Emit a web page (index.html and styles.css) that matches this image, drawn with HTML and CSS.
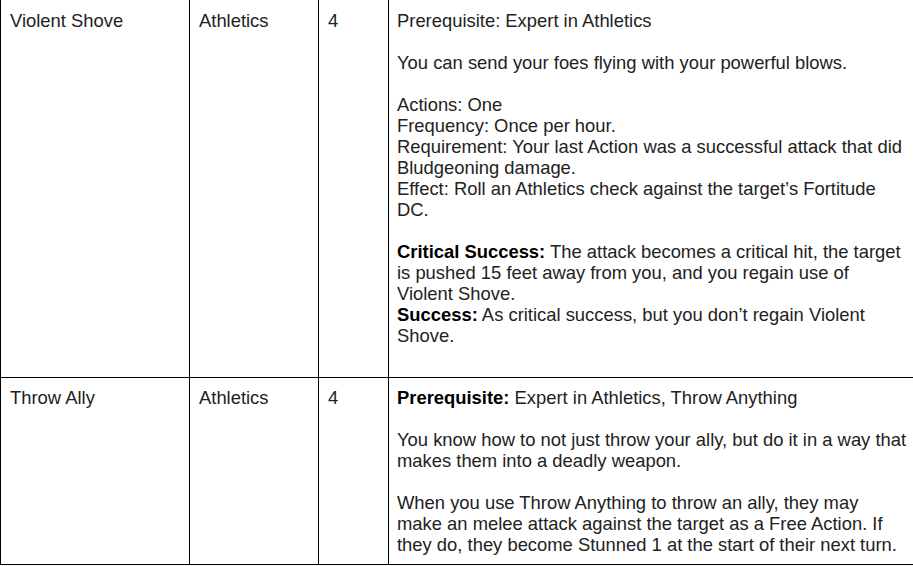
FILE: index.html
```html
<!DOCTYPE html>
<html>
<head>
<meta charset="utf-8">
<link rel="stylesheet" href="styles.css">
</head>
<body>
<div class="sheet">
  <div class="row first">
    <div class="cell c1">Violent Shove</div>
    <div class="cell c2">Athletics</div>
    <div class="cell c3">4</div>
    <div class="cell c4">
      <p class="sp">Prerequisite: Expert in Athletics</p>
      <p class="sp">You can send your foes flying with your powerful blows.</p>
      <p>Actions: One</p>
      <p>Frequency: Once per hour.</p>
      <p>Requirement: Your last Action was a successful attack that did Bludgeoning damage.</p>
      <p class="sp">Effect: Roll an Athletics check against the target’s Fortitude DC.</p>
      <p><b>Critical Success:</b> The attack becomes a critical hit, the target is pushed 15 feet away from you, and you regain use of Violent Shove.</p>
      <p class="sp"><b>Success:</b> As critical success, but you don’t regain Violent Shove.</p>
    </div>
  </div>
  <div class="row second">
    <div class="cell c1">Throw Ally</div>
    <div class="cell c2">Athletics</div>
    <div class="cell c3">4</div>
    <div class="cell c4">
      <p class="sp"><b>Prerequisite:</b> Expert in Athletics, Throw Anything</p>
      <p class="sp">You know how to not just throw your ally, but do it in a way that makes them into a deadly weapon.</p>
      <p>When you use Throw Anything to throw an ally, they may make an melee attack against the target as a Free Action. If they do, they become Stunned 1 at the start of their next turn.</p>
    </div>
  </div>
</div>
</body>
</html>
```

FILE: styles.css
```css
html, body {
  margin: 0;
  padding: 0;
  background: #ffffff;
  overflow: hidden;
}

body {
  width: 913px;
  height: 566px;
}

.sheet {
  width: 917px;
  font-family: "Liberation Sans", Arial, sans-serif;
  font-size: 18.4px;
  line-height: 21px;
  color: #222222;
}

.row {
  display: grid;
  grid-template-columns: 189px 129px 70px 529px;
  border-bottom: 1px solid #000000;
}

.cell {
  border-left: 1px solid #000000;
  padding: 9px;
}

.row.first .cell {
  padding-top: 10px;
  padding-bottom: 10px;
}

.row.second .cell {
  padding-bottom: 9px;
}

.cell.c4 {
  padding-left: 8px;
  padding-right: 10px;
}

.cell p {
  margin: 0;
}

.cell p.sp {
  margin-bottom: 21px;
}

.cell b {
  font-weight: bold;
  color: #000000;
}
```
